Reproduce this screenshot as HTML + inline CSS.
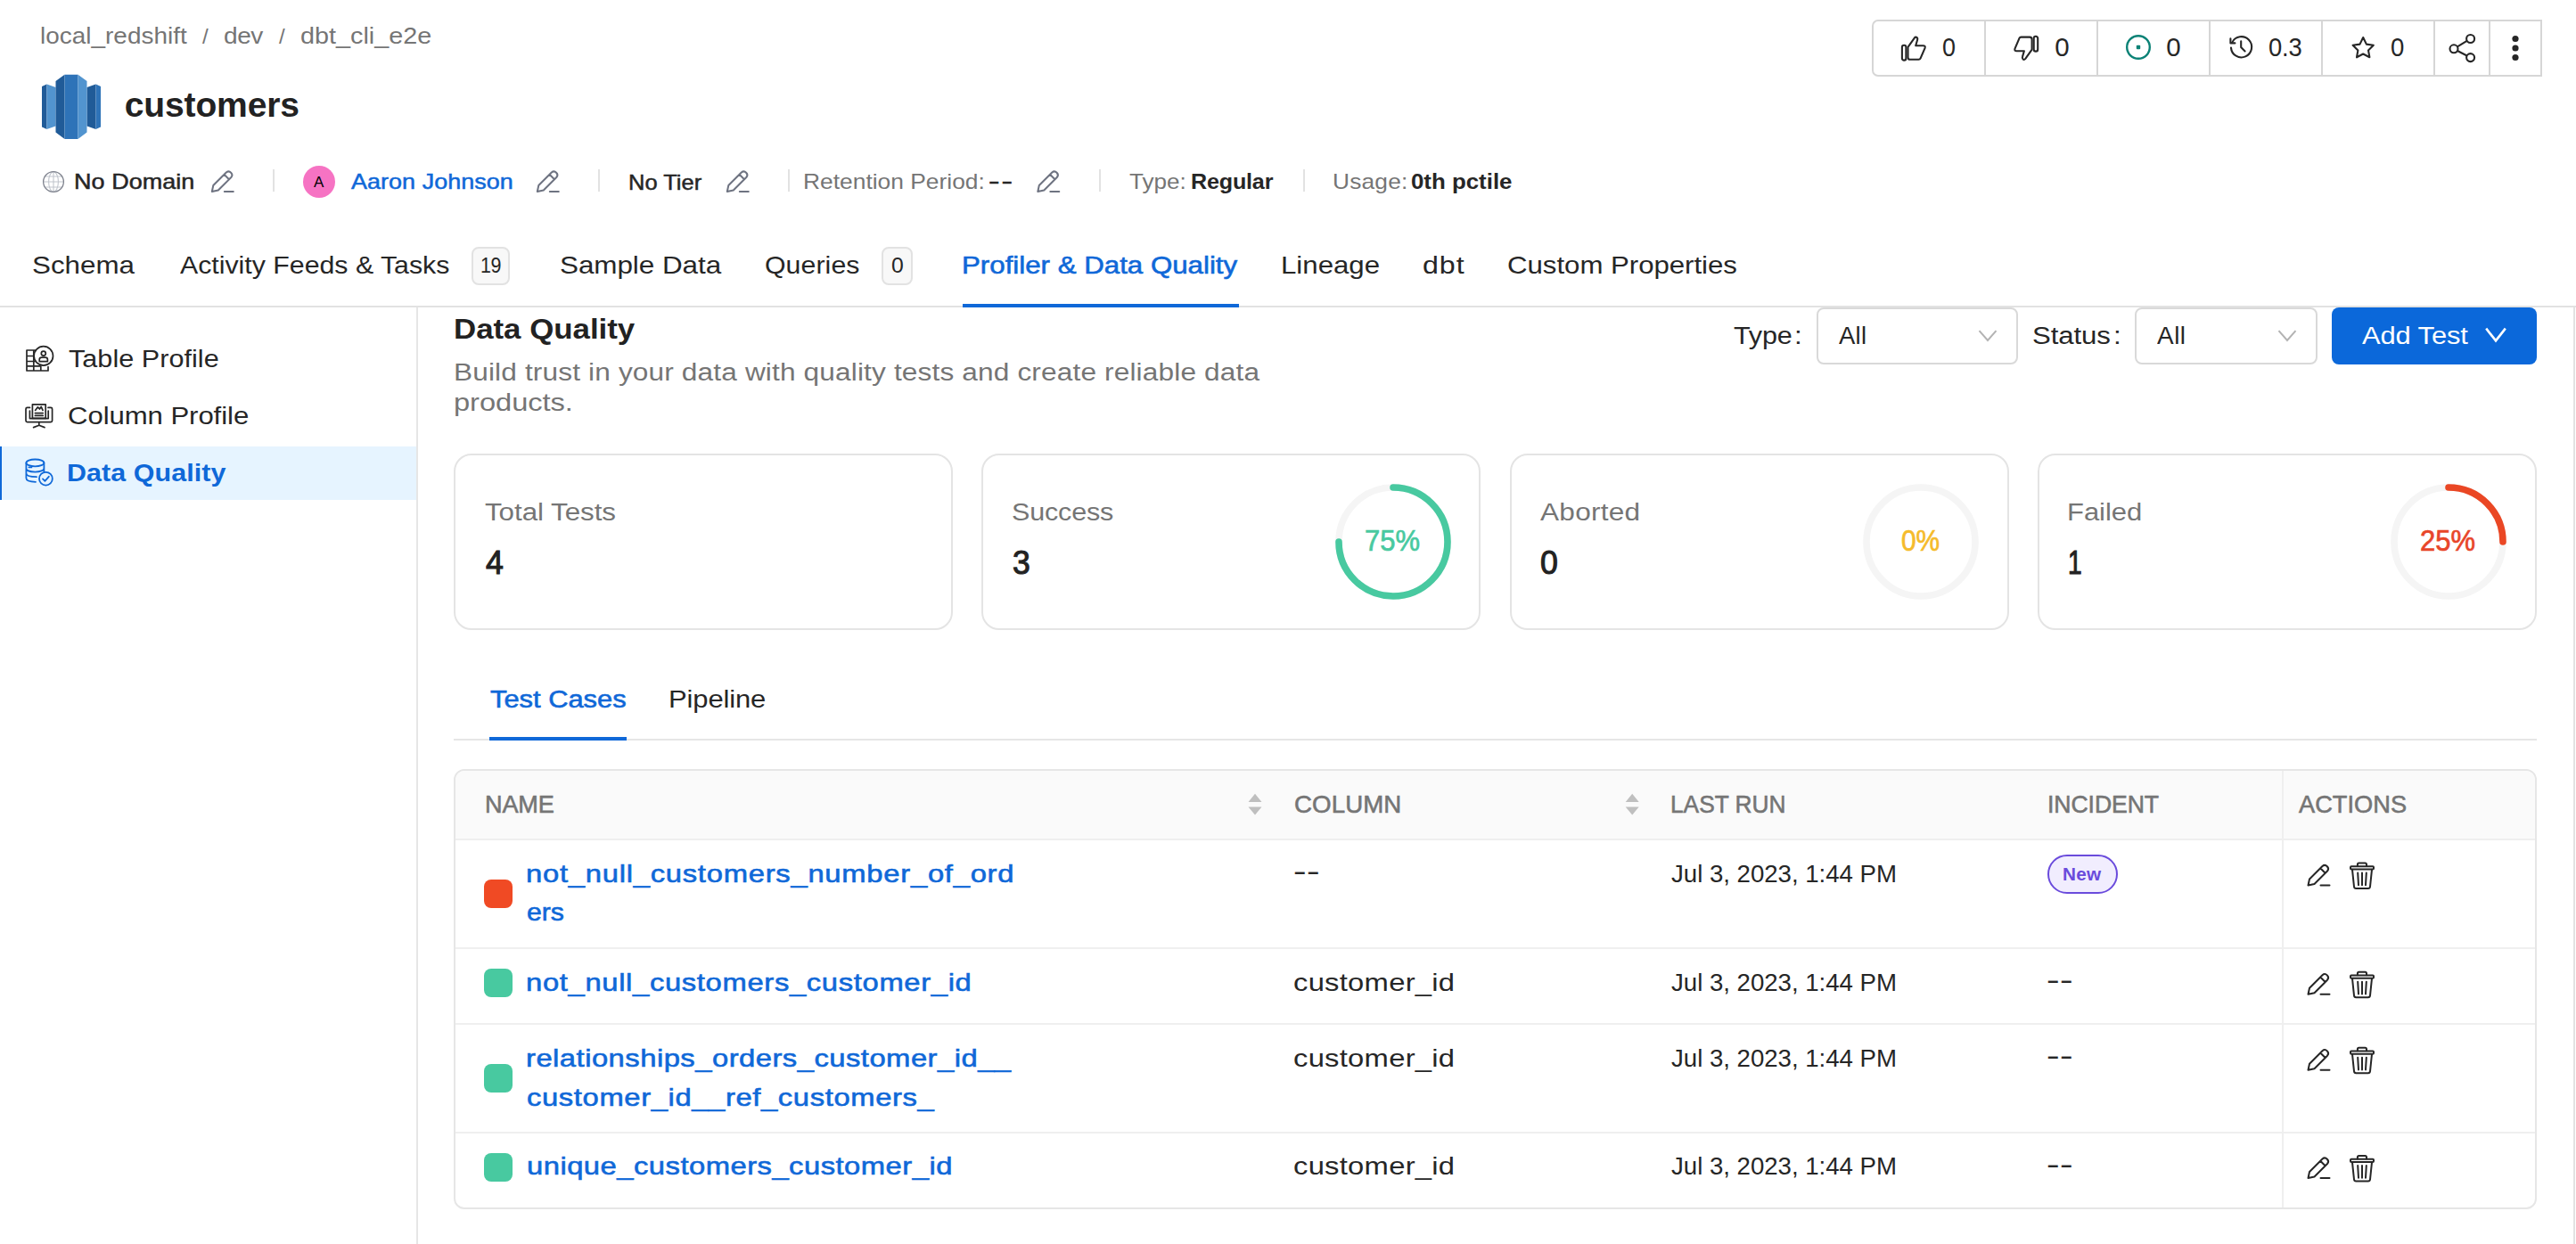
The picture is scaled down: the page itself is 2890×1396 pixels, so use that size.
<!DOCTYPE html>
<html lang="en">
<head>
<meta charset="utf-8">
<title>customers - Profiler &amp; Data Quality</title>
<style>
html,body{margin:0;padding:0;background:#fff;}
body{width:2890px;height:1396px;position:relative;overflow:hidden;font-family:"Liberation Sans",sans-serif;}
.b{position:absolute;box-sizing:border-box;}
.t{position:absolute;white-space:nowrap;line-height:1;font-family:"Liberation Sans",sans-serif;transform-origin:0 0;}
.sep{position:absolute;width:2px;height:25px;top:189.5px;background:#e2e2e2;}
.card{position:absolute;box-sizing:border-box;top:509px;width:560px;height:198px;border:2px solid #e4e4e4;border-radius:20px;background:#fff;}
.hl{position:absolute;left:511px;width:2333px;height:2px;background:#efefef;}
.sq{position:absolute;left:543px;width:32px;height:32px;border-radius:8px;background:#48c9a0;}
svg{position:absolute;left:0;top:0;overflow:visible;}
</style>
</head>
<body>

<!-- ===== top-right action buttons ===== -->
<div class="b" style="left:2100px;top:22px;width:752px;height:64px;border:2px solid #d6d6d6;border-radius:7px 0 0 7px;"></div>
<div class="b" style="left:2226px;top:24px;width:2px;height:60px;background:#d6d6d6;"></div>
<div class="b" style="left:2352px;top:24px;width:2px;height:60px;background:#d6d6d6;"></div>
<div class="b" style="left:2478px;top:24px;width:2px;height:60px;background:#d6d6d6;"></div>
<div class="b" style="left:2604px;top:24px;width:2px;height:60px;background:#d6d6d6;"></div>
<div class="b" style="left:2730px;top:24px;width:2px;height:60px;background:#d6d6d6;"></div>
<div class="b" style="left:2792px;top:24px;width:2px;height:60px;background:#d6d6d6;"></div>

<!-- ===== meta row ===== -->
<div class="sep" style="left:306px;"></div>
<div class="sep" style="left:671px;"></div>
<div class="sep" style="left:884px;"></div>
<div class="sep" style="left:1233px;"></div>
<div class="sep" style="left:1462px;"></div>
<div class="b" style="left:340px;top:186px;width:36px;height:36px;border-radius:50%;background:#f673c3;"></div>

<!-- ===== main tabs ===== -->
<div class="b" style="left:529px;top:277px;width:43px;height:43px;border:2px solid #e2e2e2;border-radius:8px;background:#f8f8f8;"></div>
<div class="b" style="left:989px;top:277px;width:35px;height:43px;border:2px solid #e2e2e2;border-radius:8px;background:#f8f8f8;"></div>
<div class="b" style="left:0;top:343px;width:2890px;height:2px;background:#e2e2e2;"></div>
<div class="b" style="left:1080px;top:341px;width:310px;height:4px;background:#0f68d8;"></div>

<!-- ===== sidebar ===== -->
<div class="b" style="left:0;top:501px;width:467px;height:60px;background:#e6f4ff;"></div>
<div class="b" style="left:0;top:501px;width:2px;height:60px;background:#0f68d8;"></div>
<div class="b" style="left:467px;top:345px;width:2px;height:1051px;background:#e6e6e6;"></div>
<div class="b" style="left:2887px;top:345px;width:2px;height:1051px;background:#e2e2e2;"></div>

<!-- ===== filters ===== -->
<div class="b" style="left:2038px;top:345px;width:226px;height:64px;border:2px solid #d9d9d9;border-radius:8px;background:#fff;"></div>
<div class="b" style="left:2395px;top:345px;width:205px;height:64px;border:2px solid #d9d9d9;border-radius:8px;background:#fff;"></div>
<div class="b" style="left:2616px;top:345px;width:230px;height:64px;border-radius:8px;background:#0b68da;"></div>

<!-- ===== summary cards ===== -->
<div class="card" style="left:509px;"></div>
<div class="card" style="left:1101px;"></div>
<div class="card" style="left:1694px;"></div>
<div class="card" style="left:2286px;"></div>

<!-- ===== sub tabs ===== -->
<div class="b" style="left:509px;top:829px;width:2337px;height:2px;background:#e6e6e6;"></div>
<div class="b" style="left:549px;top:827px;width:154px;height:4px;background:#0f68d8;"></div>

<!-- ===== table ===== -->
<div class="b" style="left:509px;top:863px;width:2337px;height:494px;border:2px solid #e6e6e6;border-radius:12px;background:#fff;overflow:hidden;">
  <div class="b" style="left:0;top:0;width:2333px;height:77px;background:#fafafa;"></div>
</div>
<div class="hl" style="top:941px;"></div>
<div class="hl" style="top:1063px;"></div>
<div class="hl" style="top:1148px;"></div>
<div class="hl" style="top:1270px;"></div>
<div class="b" style="left:2560px;top:865px;width:2px;height:490px;background:#efefef;"></div>
<div class="sq" style="top:987px;background:#f04a24;"></div>
<div class="sq" style="top:1087px;"></div>
<div class="sq" style="top:1194px;"></div>
<div class="sq" style="top:1294px;"></div>
<div class="b" style="left:2297px;top:959px;width:79px;height:44px;border:2px solid #6a4bdc;border-radius:22px;background:#f1edfe;"></div>

<svg width="2890" height="1396" viewBox="0 0 2890 1396" fill="none">
<defs>
  <g id="pen"><path d="M1.5 24.5 L3 17.5 L17.5 3 A3.9 3.9 0 0 1 23 8.5 L8.5 23 Z M15.2 5.3 L20.7 10.8 M15.5 24.6 H25.5" stroke-width="2" stroke-linejoin="round" stroke-linecap="round"/></g>
  <g id="trash" stroke="#262626" stroke-width="2" stroke-linejoin="round" stroke-linecap="round">
    <path d="M8.5 4.5 V2.6 Q8.5 1 10.1 1 H17 Q18.6 1 18.6 2.6 V4.5"/>
    <path d="M1.6 4.6 H25.6 Q26.6 4.6 26.6 5.6 V7 Q26.6 8 25.6 8 H1.6 Q0.6 8 0.6 7 V5.6 Q0.6 4.6 1.6 4.6 Z"/>
    <path d="M2.6 8.2 L4.6 27.4 Q4.8 29.4 6.8 29.4 H20.4 Q22.4 29.4 22.6 27.4 L24.6 8.2"/>
    <path d="M8.8 12 L9.6 25.6 M13.6 12 V25.6 M18.4 12 L17.6 25.6"/>
  </g>
  <g id="sort" fill="#bfbfbf"><path d="M0 9.3 L7.5 0 L15 9.3 Z M0 14.8 H15 L7.5 23.8 Z"/></g>
  <g id="like" stroke="#262626" stroke-width="2.1" stroke-linejoin="round" stroke-linecap="round">
    <rect x="1.1" y="10.4" width="4.5" height="16.8" rx="2.2"/>
    <path d="M7.7 12.4 L15.2 1.9 Q16.4 0.6 17.8 1.7 Q18.9 2.7 18.3 4.4 L16.4 10.8 H24.8 Q27.6 10.8 26.8 13.4 L21.7 25.3 Q21.2 26.4 19.8 26.4 H10.2 Q7.7 26.4 7.7 23.8 Z"/>
  </g>
</defs>

<!-- redshift logo -->
<g>
  <polygon points="47,97 52.5,94.5 52.5,145 47,142.5" fill="#205b98"/>
  <polygon points="52.5,94.5 62.5,98 62.5,141.5 52.5,145" fill="#5294cf"/>
  <polygon points="97.5,98 107.5,94.5 107.5,145 97.5,141.5" fill="#205b98"/>
  <polygon points="107.5,94.5 113,97 113,142.5 107.5,145" fill="#2e73b8"/>
  <polygon points="62.5,91 72.5,83.7 72.5,156 62.5,148.5" fill="#205b98"/>
  <polygon points="72.5,83.7 87.5,83.7 87.5,156 72.5,156" fill="#2e73b8"/>
  <polygon points="87.5,83.7 97.5,91 97.5,148.5 87.5,156" fill="#5294cf"/>
</g>

<!-- globe -->
<g stroke="#c2c6cd" stroke-width="1.1">
  <ellipse cx="60" cy="204" rx="5.4" ry="11.3"/>
  <path d="M60 192.7 V215.3 M48.7 204 H71.3 M50.4 198 H69.6 M50.4 210 H69.6"/>
  <circle cx="60" cy="204" r="11.4" stroke="#7f838e" stroke-width="1.3"/>
</g>

<!-- header pencils -->
<g stroke="#6e7381"><use href="#pen" x="236.3" y="190.5"/><use href="#pen" x="601.3" y="190.5"/><use href="#pen" x="814.3" y="190.5"/><use href="#pen" x="1162.8" y="190.5"/></g>

<!-- like / dislike -->
<use href="#like" x="2132.8" y="40.4"/>
<use href="#like" transform="translate(2287.3 68) rotate(180)"/>

<!-- open task -->
<circle cx="2399" cy="53" r="12.8" stroke="#0b8276" stroke-width="2.4"/>
<rect x="2396.8" y="50.8" width="4.4" height="4.4" rx="1" fill="#0b8276"/>

<!-- version history -->
<g stroke="#262626" stroke-width="2.1" stroke-linecap="round" stroke-linejoin="round">
  <path d="M2504.2 47.6 A11.6 11.6 0 1 1 2503 53.6"/>
  <path d="M2502.4 43.4 V48.4 H2507.4"/>
  <path d="M2514.2 46.2 V53 L2518.6 57.4"/>
</g>

<!-- star -->
<path d="M2651.2 42 L2654.9 49.6 L2662.8 50.7 L2657 56.4 L2658.4 64.3 L2651.2 60.5 L2644 64.3 L2645.4 56.4 L2639.6 50.7 L2647.5 49.6 Z" stroke="#262626" stroke-width="2.1" stroke-linejoin="round"/>

<!-- share -->
<g stroke="#262626" stroke-width="2.1">
  <circle cx="2771.6" cy="43.5" r="4.5"/><circle cx="2753" cy="54.8" r="4.5"/><circle cx="2771.6" cy="64.6" r="4.5"/>
  <path d="M2757 52.4 L2767.6 45.9 M2757 57 L2767.6 62.5"/>
</g>

<!-- kebab -->
<g fill="#262626"><circle cx="2822" cy="43.5" r="3.6"/><circle cx="2822" cy="54" r="3.6"/><circle cx="2822" cy="64.5" r="3.6"/></g>

<!-- sidebar: table profile -->
<g stroke="#262626" stroke-width="1.7" stroke-linejoin="round" stroke-linecap="round">
  <path d="M39.5 393 H30 V416 H54 V411.5 M30 399.5 H37.5 M30 405.5 H38.5 M30 410.8 H45 M37.8 393 V416 M45.8 411 V416"/>
  <circle cx="48.8" cy="399.4" r="10.7"/>
  <circle cx="48.8" cy="396.6" r="2.5"/>
  <path d="M44.2 405.6 V403.6 Q44.2 401.2 46.6 401.2 H51 Q53.4 401.2 53.4 403.6 V405.6 Z"/>
</g>
<!-- sidebar: column profile -->
<g stroke="#262626" stroke-width="1.7" stroke-linejoin="round" stroke-linecap="round">
  <path d="M33.5 457.4 H30.6 Q29 457.4 29 459 V472 Q29 473.6 30.6 473.6 H57 Q58.6 473.6 58.6 472 V459 Q58.6 457.4 57 457.4 H54"/>
  <path d="M33.4 461 V469.6 H54.2 V461"/>
  <rect x="36.4" y="453.8" width="14.8" height="15.6"/>
  <path d="M39.4 463.6 H48.2 M39.4 466.4 H48.2 M39.6 460.4 L42.4 456.8 L44.4 459 L46.2 456.4 L48 460.4"/>
  <path d="M43.8 473.8 V477.4 M37.6 479.6 L43.8 477.2 L50 479.6"/>
</g>
<!-- sidebar: data quality -->
<g stroke="#0f68d8" stroke-width="1.8" stroke-linejoin="round" stroke-linecap="round">
  <ellipse cx="39.4" cy="519.4" rx="10" ry="3.9"/>
  <path d="M29.4 519.6 V536.6 C29.4 539 33.4 540.8 40 540.8 M49.4 519.6 V529 M29.4 525.4 C29.4 527.8 33.4 529.6 39.4 529.6 C45 529.6 49.4 527.8 49.4 525.4 M29.4 531 C29.4 533.4 33.4 535.2 41 535.2 M32.4 524.4 H35.4"/>
  <circle cx="51.4" cy="537.2" r="7.4" fill="#e6f4ff"/>
  <path d="M48 537.4 L50.4 539.8 L54.8 534.8"/>
</g>

<!-- select chevrons -->
<path d="M2220.5 371.2 L2230 382 L2239.5 371.2" stroke="#b3b3b3" stroke-width="2"/>
<path d="M2556.5 371.2 L2566 382 L2575.5 371.2" stroke="#b3b3b3" stroke-width="2"/>
<path d="M2789.2 368.6 L2800 382.4 L2810.8 368.6" stroke="#fff" stroke-width="2.6"/>

<!-- progress rings -->
<g stroke-width="7.6" stroke-linecap="round">
  <circle cx="1563" cy="608" r="61" stroke="#f5f5f5"/>
  <path d="M1563 547 A61 61 0 1 1 1502 608" stroke="#48c9a0"/>
  <circle cx="2155" cy="608" r="61" stroke="#f5f5f5"/>
  <circle cx="2747" cy="608" r="61" stroke="#f5f5f5"/>
  <path d="M2747 547 A61 61 0 0 1 2808 608" stroke="#ea4724"/>
</g>

<!-- sort icons -->
<use href="#sort" x="1400.5" y="890.7"/>
<use href="#sort" x="1823.7" y="890.7"/>

<!-- row actions -->
<g stroke="#262626">
  <use href="#pen" x="2588" y="969"/><use href="#pen" x="2588" y="1091.2"/><use href="#pen" x="2588" y="1176.2"/><use href="#pen" x="2588" y="1297.5"/>
</g>
<use href="#trash" x="2636.4" y="967.6"/><use href="#trash" x="2636.4" y="1089.8"/><use href="#trash" x="2636.4" y="1174.8"/><use href="#trash" x="2636.4" y="1296.1"/>
</svg>


<span class="t" id="bc1" style="left:44.80px;top:28.04px;font-size:25px;color:#757575;transform:scaleX(1.1151);letter-spacing:0.028px;">local_redshift</span>
<span class="t" id="bc2" style="left:227.00px;top:28.88px;font-size:24px;color:#757575;">/</span>
<span class="t" id="bc3" style="left:251.00px;top:28.04px;font-size:25px;color:#757575;transform:scaleX(1.1205);letter-spacing:-0.402px;">dev</span>
<span class="t" id="bc4" style="left:313.00px;top:28.88px;font-size:24px;color:#757575;">/</span>
<span class="t" id="bc5" style="left:337.00px;top:28.04px;font-size:25px;color:#757575;transform:scaleX(1.1508);">dbt_cli_e2e</span>
<span class="t" id="title" style="left:139.80px;top:98.19px;font-size:39px;color:#222;font-weight:700;letter-spacing:-0.138px;">customers</span>
<span class="t" id="m1" style="left:83.00px;top:191.68px;font-size:24px;color:#262626;transform:scaleX(1.1229);-webkit-text-stroke:0.50px #262626;letter-spacing:0.056px;">No Domain</span>
<span class="t" id="mA" style="left:352.00px;top:195.61px;font-size:17px;color:#000;">A</span>
<span class="t" id="m2" style="left:393.80px;top:191.68px;font-size:24px;color:#0f68d8;transform:scaleX(1.1199);-webkit-text-stroke:0.50px #0f68d8;letter-spacing:0.067px;">Aaron Johnson</span>
<span class="t" id="m3" style="left:705.00px;top:192.98px;font-size:24px;color:#262626;transform:scaleX(1.0610);-webkit-text-stroke:0.50px #262626;letter-spacing:0.016px;">No Tier</span>
<span class="t" id="m4" style="left:900.80px;top:191.68px;font-size:24px;color:#757575;transform:scaleX(1.0989);">Retention Period:</span>
<span class="t" id="m5" style="left:1109.00px;top:191.38px;font-size:24px;color:#262626;transform:scaleX(1.5625);-webkit-text-stroke:0.50px #262626;letter-spacing:1.280px;">--</span>
<span class="t" id="m6" style="left:1267.00px;top:191.68px;font-size:24px;color:#757575;transform:scaleX(1.0877);">Type:</span>
<span class="t" id="m7" style="left:1336.00px;top:191.68px;font-size:24px;color:#262626;transform:scaleX(1.0455);font-weight:700;letter-spacing:-0.159px;">Regular</span>
<span class="t" id="m8" style="left:1494.80px;top:191.68px;font-size:24px;color:#757575;transform:scaleX(1.0959);letter-spacing:0.183px;">Usage:</span>
<span class="t" id="m9" style="left:1583.00px;top:191.68px;font-size:24px;color:#262626;transform:scaleX(1.0769);font-weight:700;">0th pctile</span>
<span class="t" id="tb1" style="left:36.00px;top:283.72px;font-size:27.5px;color:#262626;transform:scaleX(1.1400);">Schema</span>
<span class="t" id="tb2" style="left:202.00px;top:283.72px;font-size:27.5px;color:#262626;transform:scaleX(1.1011);">Activity Feeds &amp; Tasks</span>
<span class="t" id="tb2b" style="left:539.00px;top:285.68px;font-size:24px;color:#262626;transform:scaleX(0.8958);letter-spacing:-0.558px;">19</span>
<span class="t" id="tb3" style="left:628.00px;top:283.72px;font-size:27.5px;color:#262626;transform:scaleX(1.1424);letter-spacing:-0.044px;">Sample Data</span>
<span class="t" id="tb4" style="left:858.00px;top:283.72px;font-size:27.5px;color:#262626;transform:scaleX(1.1000);letter-spacing:0.076px;">Queries</span>
<span class="t" id="tb4b" style="left:1000.00px;top:285.68px;font-size:24px;color:#262626;transform:scaleX(1.0333);">0</span>
<span class="t" id="tb5" style="left:1079.00px;top:283.72px;font-size:27.5px;color:#0f68d8;transform:scaleX(1.1365);-webkit-text-stroke:0.58px #0f68d8;">Profiler &amp; Data Quality</span>
<span class="t" id="tb6" style="left:1437.00px;top:283.72px;font-size:27.5px;color:#262626;transform:scaleX(1.1337);letter-spacing:0.015px;">Lineage</span>
<span class="t" id="tb7" style="left:1595.80px;top:283.72px;font-size:27.5px;color:#262626;transform:scaleX(1.1700);letter-spacing:0.812px;">dbt</span>
<span class="t" id="tb8" style="left:1691.00px;top:283.72px;font-size:27.5px;color:#262626;transform:scaleX(1.1350);letter-spacing:-0.028px;">Custom Properties</span>
<span class="t" id="bt1" style="left:2179.00px;top:37.83px;font-size:29.5px;color:#262626;transform:scaleX(0.9133);">0</span>
<span class="t" id="bt2" style="left:2305.20px;top:37.83px;font-size:29.5px;color:#262626;">0</span>
<span class="t" id="bt3" style="left:2430.20px;top:37.83px;font-size:29.5px;color:#262626;">0</span>
<span class="t" id="bt4" style="left:2545.20px;top:37.83px;font-size:29.5px;color:#262626;transform:scaleX(0.9282);letter-spacing:-0.215px;">0.3</span>
<span class="t" id="bt5" style="left:2682.00px;top:37.83px;font-size:29.5px;color:#262626;transform:scaleX(0.9333);">0</span>
<span class="t" id="sb1" style="left:77.00px;top:389.84px;font-size:27px;color:#262626;transform:scaleX(1.1318);letter-spacing:0.037px;">Table Profile</span>
<span class="t" id="sb2" style="left:76.00px;top:453.84px;font-size:27px;color:#262626;transform:scaleX(1.1526);letter-spacing:-0.060px;">Column Profile</span>
<span class="t" id="sb3" style="left:75.00px;top:518.14px;font-size:27px;color:#0f68d8;transform:scaleX(1.1255);font-weight:700;letter-spacing:0.089px;">Data Quality</span>
<span class="t" id="h1" style="left:509.00px;top:353.84px;font-size:31.5px;color:#222;transform:scaleX(1.1060);font-weight:700;letter-spacing:-0.008px;">Data Quality</span>
<span class="t" id="d1" style="left:509.00px;top:405.14px;font-size:27px;color:#757575;transform:scaleX(1.1700);letter-spacing:0.130px;">Build trust in your data with quality tests and create reliable data</span>
<span class="t" id="d2" style="left:509.00px;top:438.00px;font-size:28px;color:#757575;transform:scaleX(1.1667);letter-spacing:-0.054px;">products.</span>
<span class="t" id="c1" style="left:1945.00px;top:363.64px;font-size:27px;color:#262626;transform:scaleX(1.1316);letter-spacing:-0.147px;">Type</span>
<span class="t" id="c1c" style="left:2013.00px;top:363.64px;font-size:27px;color:#262626;transform:scaleX(1.1700);">:</span>
<span class="t" id="c2" style="left:2063.00px;top:363.64px;font-size:27px;color:#262626;transform:scaleX(1.0172);letter-spacing:0.246px;">All</span>
<span class="t" id="c3" style="left:2280.00px;top:363.64px;font-size:27px;color:#262626;transform:scaleX(1.1533);letter-spacing:-0.087px;">Status</span>
<span class="t" id="c3c" style="left:2370.80px;top:363.64px;font-size:27px;color:#262626;transform:scaleX(1.1700);">:</span>
<span class="t" id="c4" style="left:2420.00px;top:363.64px;font-size:27px;color:#262626;transform:scaleX(1.0345);letter-spacing:0.483px;">All</span>
<span class="t" id="c5" style="left:2649.80px;top:363.64px;font-size:27px;color:#fff;transform:scaleX(1.1423);letter-spacing:-0.075px;">Add Test</span>
<span class="t" id="k1" style="left:544.00px;top:561.84px;font-size:27px;color:#757575;transform:scaleX(1.1603);letter-spacing:-0.034px;">Total Tests</span>
<span class="t" id="k2" style="left:1135.00px;top:561.84px;font-size:27px;color:#757575;transform:scaleX(1.1300);letter-spacing:-0.147px;">Success</span>
<span class="t" id="k3" style="left:1728.00px;top:561.84px;font-size:27px;color:#757575;transform:scaleX(1.1700);letter-spacing:0.214px;">Aborted</span>
<span class="t" id="k4" style="left:2318.80px;top:561.84px;font-size:27px;color:#757575;transform:scaleX(1.1471);letter-spacing:-0.017px;">Failed</span>
<span class="t" id="n1" style="left:545.00px;top:612.76px;font-size:37.5px;color:#222;transform:scaleX(0.9524);-webkit-text-stroke:1.12px #222;">4</span>
<span class="t" id="n2" style="left:1136.00px;top:612.76px;font-size:37.5px;color:#222;transform:scaleX(0.9474);-webkit-text-stroke:1.12px #222;">3</span>
<span class="t" id="n3" style="left:1728.00px;top:612.76px;font-size:37.5px;color:#222;transform:scaleX(0.9500);-webkit-text-stroke:1.12px #222;">0</span>
<span class="t" id="n4" style="left:2320.00px;top:612.76px;font-size:37.5px;color:#222;transform:scaleX(0.7500);-webkit-text-stroke:1.12px #222;">1</span>
<span class="t" id="p2" style="left:1531.00px;top:590.79px;font-size:32.5px;color:#48c9a0;transform:scaleX(0.9531);-webkit-text-stroke:0.68px #48c9a0;">75%</span>
<span class="t" id="p3" style="left:2132.80px;top:590.79px;font-size:32.5px;color:#f5bb2b;transform:scaleX(0.9196);-webkit-text-stroke:0.68px #f5bb2b;letter-spacing:-0.109px;">0%</span>
<span class="t" id="p4" style="left:2715.00px;top:590.79px;font-size:32.5px;color:#e8462a;transform:scaleX(0.9531);-webkit-text-stroke:0.68px #e8462a;">25%</span>
<span class="t" id="t21" style="left:550.00px;top:771.84px;font-size:27px;color:#0f68d8;transform:scaleX(1.1429);-webkit-text-stroke:0.57px #0f68d8;">Test Cases</span>
<span class="t" id="t22" style="left:750.00px;top:771.84px;font-size:27px;color:#262626;transform:scaleX(1.1473);letter-spacing:-0.112px;">Pipeline</span>
<span class="t" id="th1" style="left:544.00px;top:889.30px;font-size:28px;color:#757575;transform:scaleX(0.9679);-webkit-text-stroke:0.59px #757575;letter-spacing:-0.172px;">NAME</span>
<span class="t" id="th2" style="left:1452.00px;top:889.30px;font-size:28px;color:#757575;transform:scaleX(0.9874);-webkit-text-stroke:0.59px #757575;letter-spacing:0.101px;">COLUMN</span>
<span class="t" id="th3" style="left:1874.00px;top:889.30px;font-size:28px;color:#757575;transform:scaleX(0.9381);-webkit-text-stroke:0.59px #757575;letter-spacing:0.015px;">LAST RUN</span>
<span class="t" id="th4" style="left:2297.00px;top:889.30px;font-size:28px;color:#757575;transform:scaleX(0.9500);-webkit-text-stroke:0.59px #757575;letter-spacing:-0.075px;">INCIDENT</span>
<span class="t" id="th5" style="left:2579.40px;top:889.30px;font-size:28px;color:#757575;transform:scaleX(0.9710);-webkit-text-stroke:0.59px #757575;letter-spacing:0.034px;">ACTIONS</span>
<span class="t" id="r1a" style="left:590.00px;top:966.80px;font-size:28px;color:#0f68d8;transform:scaleX(1.1700);-webkit-text-stroke:0.59px #0f68d8;letter-spacing:0.634px;">not_null_customers_number_of_ord</span>
<span class="t" id="r1b" style="left:591.00px;top:1010.30px;font-size:28px;color:#0f68d8;transform:scaleX(1.0789);-webkit-text-stroke:0.59px #0f68d8;">ers</span>
<span class="t" id="r1c" style="left:1451.00px;top:965.14px;font-size:27px;color:#262626;transform:scaleX(1.6176);-webkit-text-stroke:0.15px #262626;letter-spacing:0.309px;">--</span>
<span class="t" id="r1d" style="left:1875.00px;top:967.22px;font-size:27.5px;color:#262626;transform:scaleX(1.0048);letter-spacing:-0.021px;">Jul 3, 2023, 1:44 PM</span>
<span class="t" id="r1e" style="left:2314.00px;top:971.99px;font-size:19.5px;color:#6a4bdc;transform:scaleX(1.0625);font-weight:700;letter-spacing:0.235px;">New</span>
<span class="t" id="r2a" style="left:590.00px;top:1089.00px;font-size:28px;color:#0f68d8;transform:scaleX(1.1700);-webkit-text-stroke:0.59px #0f68d8;letter-spacing:0.563px;">not_null_customers_customer_id</span>
<span class="t" id="r2c" style="left:1451.00px;top:1089.00px;font-size:28px;color:#262626;transform:scaleX(1.1700);letter-spacing:0.222px;">customer_id</span>
<span class="t" id="r2d" style="left:1875.00px;top:1089.42px;font-size:27.5px;color:#262626;transform:scaleX(1.0048);letter-spacing:-0.021px;">Jul 3, 2023, 1:44 PM</span>
<span class="t" id="r2e" style="left:2296.00px;top:1087.34px;font-size:27px;color:#262626;transform:scaleX(1.6176);-webkit-text-stroke:0.15px #262626;letter-spacing:0.309px;">--</span>
<span class="t" id="r3a" style="left:590.00px;top:1174.00px;font-size:28px;color:#0f68d8;transform:scaleX(1.1700);-webkit-text-stroke:0.59px #0f68d8;letter-spacing:0.414px;">relationships_orders_customer_id__</span>
<span class="t" id="r3b" style="left:591.00px;top:1217.80px;font-size:28px;color:#0f68d8;transform:scaleX(1.1700);-webkit-text-stroke:0.59px #0f68d8;letter-spacing:0.529px;">customer_id__ref_customers_</span>
<span class="t" id="r3c" style="left:1451.00px;top:1174.00px;font-size:28px;color:#262626;transform:scaleX(1.1700);letter-spacing:0.222px;">customer_id</span>
<span class="t" id="r3d" style="left:1875.00px;top:1174.42px;font-size:27.5px;color:#262626;transform:scaleX(1.0048);letter-spacing:-0.021px;">Jul 3, 2023, 1:44 PM</span>
<span class="t" id="r3e" style="left:2296.00px;top:1172.34px;font-size:27px;color:#262626;transform:scaleX(1.6176);-webkit-text-stroke:0.15px #262626;letter-spacing:0.309px;">--</span>
<span class="t" id="r4a" style="left:591.00px;top:1295.30px;font-size:28px;color:#0f68d8;transform:scaleX(1.1700);-webkit-text-stroke:0.59px #0f68d8;letter-spacing:0.412px;">unique_customers_customer_id</span>
<span class="t" id="r4c" style="left:1451.00px;top:1295.30px;font-size:28px;color:#262626;transform:scaleX(1.1700);letter-spacing:0.222px;">customer_id</span>
<span class="t" id="r4d" style="left:1875.00px;top:1294.72px;font-size:27.5px;color:#262626;transform:scaleX(1.0048);letter-spacing:-0.021px;">Jul 3, 2023, 1:44 PM</span>
<span class="t" id="r4e" style="left:2296.00px;top:1293.64px;font-size:27px;color:#262626;transform:scaleX(1.6176);-webkit-text-stroke:0.15px #262626;letter-spacing:0.309px;">--</span>
</body>
</html>
